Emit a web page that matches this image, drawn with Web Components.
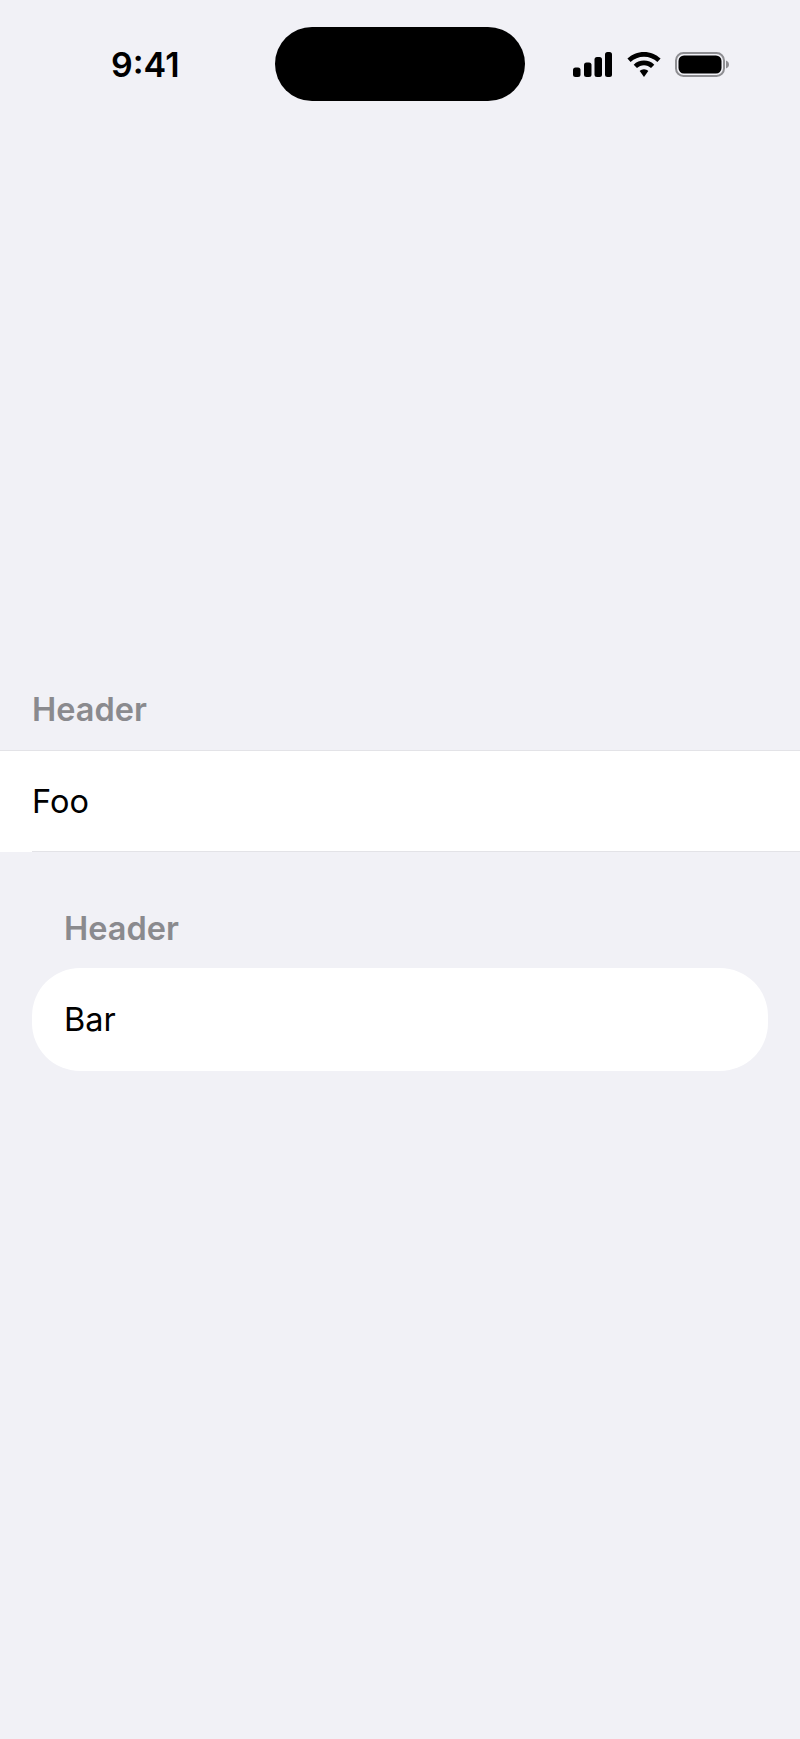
<!DOCTYPE html>
<html lang="en">
<head>
<meta charset="utf-8">
<title>List sections</title>
<style>
  html, body { margin: 0; background: #f1f1f6; }
  body { font-family: Inter, "Liberation Sans", sans-serif; }
</style>
</head>
<body>
<template id="status-bar-template">
  <style>
    :host {
      display: grid;
      grid-template-columns: 275px 250px 275px;
      align-items: center;
      padding-top: 27px;
      height: 74px;
    }
    .time {
      padding: 1px 0 0 111px;
      font-size: 34px;
      line-height: 40px;
      font-weight: 600;
      color: #000;
    }
    .island {
      height: 74px;
      background: #000;
      border-radius: 37px;
    }
    .icons {
      display: flex;
      align-items: center;
      padding-left: 48px;
      gap: 14.5px;
    }
    svg { display: block; }
  </style>
  <div class="time">9:41</div>
  <div class="island"></div>
  <div class="icons">
    <svg width="39" height="25" viewBox="0 0 39 25">
      <rect x="0" y="15.5" width="7.5" height="9.5" rx="2.5"/>
      <rect x="11" y="10.5" width="7.5" height="14.5" rx="2.5"/>
      <rect x="21.5" y="5" width="7.5" height="20" rx="2.5"/>
      <rect x="32" y="0" width="7" height="25" rx="2.5"/>
    </svg>
    <svg width="34" height="25" viewBox="0 0 34 25">
      <path d="M17 0C23.4 0 29.2 2.5 33.6 6.6L30.4 10C26.9 6.7 22.2 4.7 17 4.7S7.1 6.7 3.6 10L.4 6.6C4.8 2.5 10.6 0 17 0Z"/>
      <path d="M17 8.6C21 8.6 24.6 10.1 27.3 12.7L24 16.1C22.2 14.4 19.7 13.3 17 13.3S11.8 14.4 10 16.1L6.7 12.7C9.4 10.1 13 8.6 17 8.6Z"/>
      <path d="M17 17.2C18.7 17.2 20.2 17.9 21.3 19L17 25 12.7 19C13.8 17.9 15.3 17.2 17 17.2Z"/>
    </svg>
    <svg width="54" height="25" viewBox="0 0 54 25">
      <rect x="1" y="1" width="48" height="23" rx="7.5" fill="none" stroke="#8e8e92" stroke-width="2"/>
      <rect x="3.5" y="3.5" width="43" height="18" rx="5.5"/>
      <path d="M51 8.5C52.8 9.2 54 10.7 54 12.5S52.8 15.8 51 16.5Z" fill="#8e8e92"/>
    </svg>
  </div>
</template>

<template id="list-section-template">
  <style>
    :host {
      display: block;
      --inset: 0px;
      --row-height: 100px;
    }
    :host([inset]) {
      --inset: 32px;
      --row-height: 103px;
    }
    .header {
      padding: 0 32px 0 calc(32px + var(--inset));
      font-size: 32.5px;
      line-height: 40px;
      font-weight: 600;
      color: #8a8a8e;
    }
    .body {
      margin: 20px var(--inset) 0;
      background: #fff;
      border-top: 1px solid #e3e3e7;
    }
    /* separator stops short of the left edge, the white carries on under it */
    .body::after {
      content: "";
      display: block;
      height: 1px;
      margin-left: 32px;
      background: #e3e3e7;
    }
    :host([inset]) .body {
      margin-top: 19px;
      border: none;
      border-radius: 48px;
      overflow: hidden;
    }
    :host([inset]) .body::after {
      display: none;
    }
  </style>
  <div class="header"><slot name="header"></slot></div>
  <div class="body"><slot></slot></div>
</template>

<template id="list-row-template">
  <style>
    :host {
      display: flex;
      align-items: center;
      height: var(--row-height, 100px);
      padding-left: 32px;
      font-size: 32.5px;
      font-weight: 400;
      color: #000;
    }
  </style>
  <slot></slot>
</template>

<template id="settings-page-template">
  <style>
    :host {
      display: block;
      height: 1739px;
      background: #f1f1f6;
      overflow: hidden;
    }
    main {
      display: flex;
      flex-direction: column;
      gap: 57px;
      padding-top: 589px;
    }
  </style>
  <status-bar></status-bar>
  <main><slot></slot></main>
</template>

<settings-page>
  <list-section>
    <span slot="header">Header</span>
    <list-row>Foo</list-row>
  </list-section>
  <list-section inset>
    <span slot="header">Header</span>
    <list-row>Bar</list-row>
  </list-section>
</settings-page>

<script>
  function fromTemplate(id) {
    return class extends HTMLElement {
      constructor() {
        super();
        this.attachShadow({ mode: "open" });
        this.shadowRoot.appendChild(document.getElementById(id).content.cloneNode(true));
      }
    };
  }

  customElements.define("status-bar", fromTemplate("status-bar-template"));
  customElements.define("list-section", fromTemplate("list-section-template"));
  customElements.define("list-row", fromTemplate("list-row-template"));
  customElements.define("settings-page", fromTemplate("settings-page-template"));
</script>
</body>
</html>
